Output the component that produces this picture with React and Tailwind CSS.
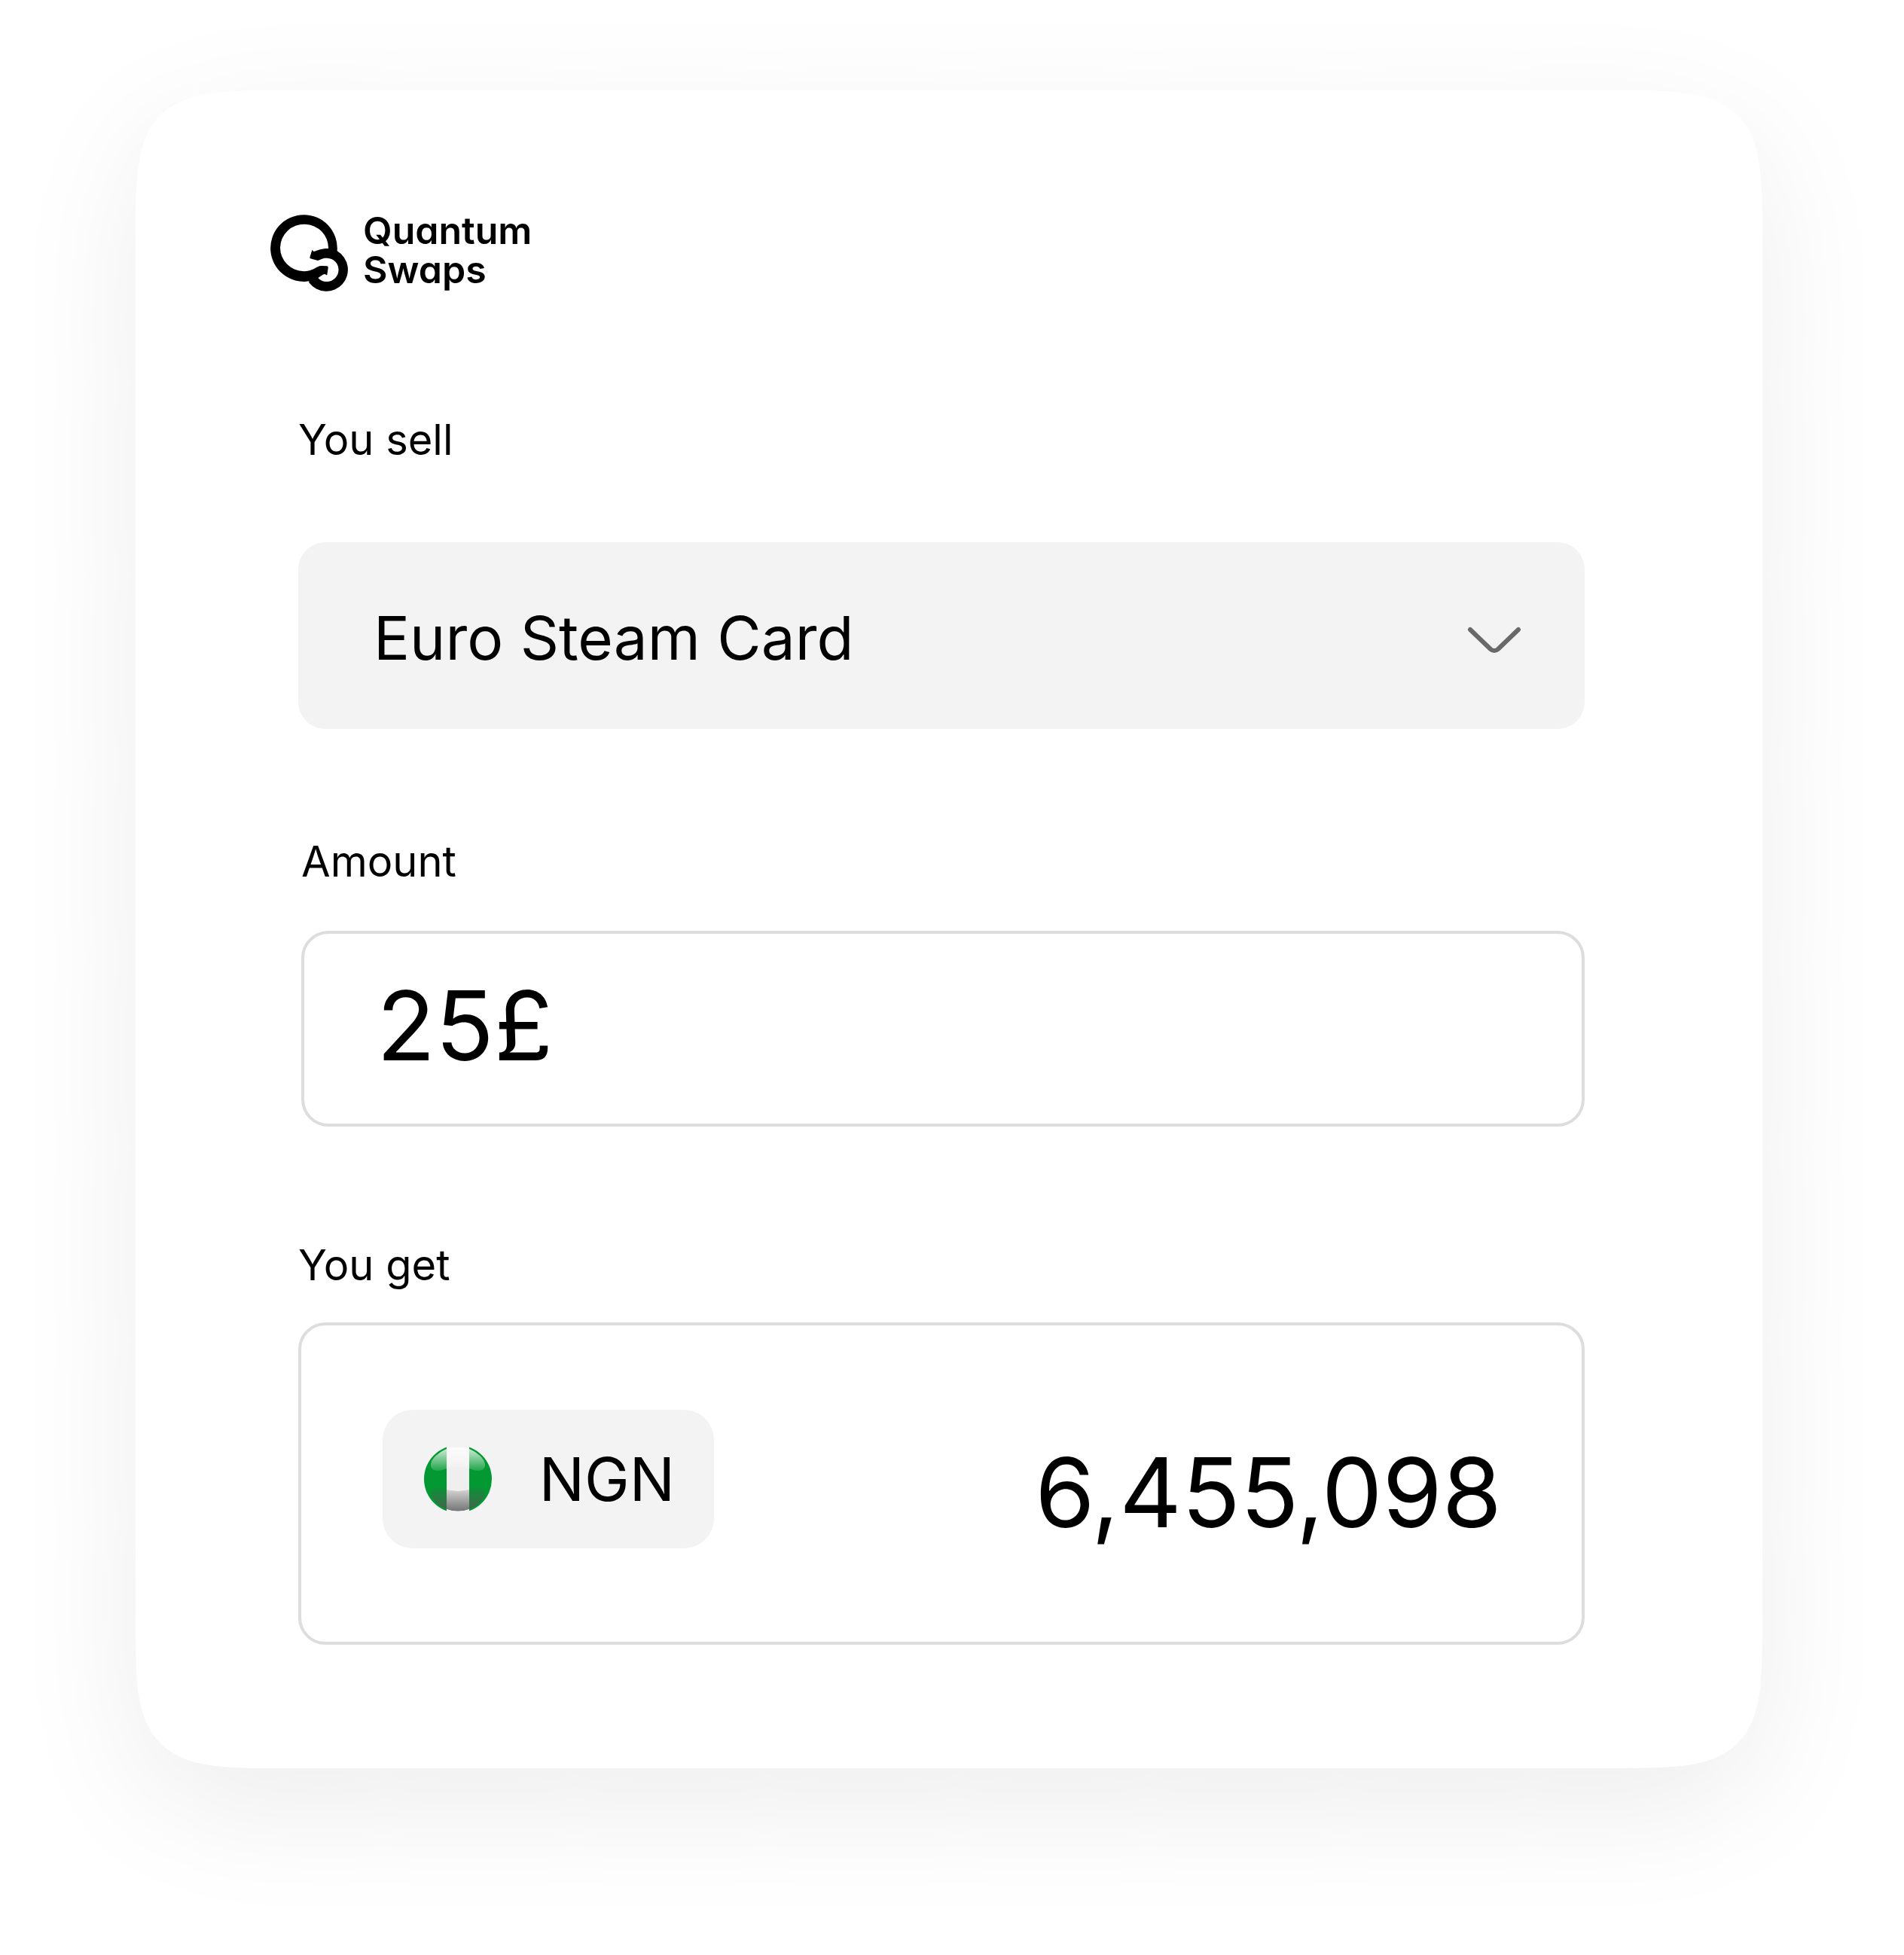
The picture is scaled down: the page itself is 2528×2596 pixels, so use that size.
import React from "react";

function LogoMark() {
  return (
    <svg className="h-[108px] w-[104px] shrink-0" viewBox="54 30 312 324" aria-hidden="true">
      <path
        fill="#000"
        fillRule="evenodd"
        d="M323 188 A133 133 0 1 0 211 310 L211 316 A86 86 0 1 0 323 190 Z
           M288 180 A96 94 0 1 0 191 271 C220 271 232 258 246 253 Q252 249 260 249 L282 250 Q288 251 287 257 L283 285 Q279 287 276 282 Q272 281 266 284 L247 297 Q260 312 280 312 A47 47 0 0 0 283 218 C266 217 258 224 246 228 L216 220 Q213 217 215 212 L223 186 L230 192 C246 188 254 180 288 180 Z"
      />
    </svg>
  );
}

function ChevronDown() {
  return (
    <svg
      className="pointer-events-none col-start-1 row-start-1 mt-3 mr-[84px] h-[36px] w-[72px] self-center justify-self-end"
      viewBox="0 0 72 36"
      fill="none"
      stroke="#696969"
      strokeWidth="6"
      strokeLinecap="round"
      aria-hidden="true"
    >
      <path d="M4 4 L31 30 Q36 34 41 30 L68 4" />
    </svg>
  );
}

function NigeriaFlag() {
  return (
    <svg className="size-24 shrink-0" viewBox="-48 -48 96 96" aria-hidden="true">
      <defs>
        <linearGradient id="gloss" x1="0" y1="0" x2="0" y2="1">
          <stop offset="0" stopColor="#fff" stopOpacity="0.85" />
          <stop offset="1" stopColor="#fff" stopOpacity="0.12" />
        </linearGradient>
        <linearGradient id="shade" x1="0" y1="0" x2="0" y2="1">
          <stop offset="0" stopColor="#555" stopOpacity="0.12" />
          <stop offset="1" stopColor="#555" stopOpacity="0.8" />
        </linearGradient>
        <clipPath id="disc">
          <circle r="45" />
        </clipPath>
        <clipPath id="inner">
          <circle r="42.7" />
        </clipPath>
      </defs>
      <g clipPath="url(#disc)">
        <rect x="-45" y="-45" width="30" height="90" fill="#039932" />
        <rect x="15" y="-45" width="30" height="90" fill="#039932" />
      </g>
      <g clipPath="url(#inner)">
        <rect x="-15" y="-45" width="30" height="90" fill="#efefef" />
        <path
          fill="url(#gloss)"
          d="M-36 -20 C-34 -31 -20 -42.7 0 -42.7 C20 -42.7 34 -31 36 -20 C37 -11 27 -9 18 -13 Q0 -20 -18 -13 C-27 -9 -37 -11 -36 -20 Z"
        />
        <path
          fill="url(#shade)"
          d="M-36 20 C-34 31 -20 42.7 0 42.7 C20 42.7 34 31 36 20 C36 11 27 9 18 13 Q0 19 -18 13 C-27 9 -36 11 -36 20 Z"
        />
      </g>
    </svg>
  );
}

const labelClass = "block self-start text-[56px] leading-[64px]";

export default function App() {
  return (
    <main className="min-h-screen bg-white pt-[120px] pr-[188px] pb-[248px] pl-[180px] font-['Inter',sans-serif] text-black">
      <section className="rounded-[120px] bg-white pt-[160px] pr-[236px] pb-[164px] pl-[178px] shadow-[0_48px_170px_rgba(0,0,0,0.08)] supports-[corner-shape:squircle]:rounded-[208px] supports-[corner-shape:squircle]:[corner-shape:squircle]">
        <header className="flex items-start gap-5">
          <LogoMark />
          <h1 className="text-[50px] leading-[52px] font-semibold [font-feature-settings:'cv11']">
            Quantum
            <br />
            Swaps
          </h1>
        </header>

        <form className="mt-[164px] flex flex-col pl-[38px]">
          <label htmlFor="sell" className={labelClass}>
            You sell
          </label>
          <div className="mt-[104px] grid">
            <select
              id="sell"
              defaultValue="Euro Steam Card"
              className="col-start-1 row-start-1 h-[248px] w-full appearance-none rounded-[36px] bg-[#f3f3f3] pt-[6px] pr-40 pl-[100px] text-[80px] outline-none"
            >
              <option>Euro Steam Card</option>
            </select>
            <ChevronDown />
          </div>

          <div className="mt-36 flex flex-col pl-1">
            <label htmlFor="amount" className={labelClass}>
              Amount
            </label>
            <input
              id="amount"
              type="text"
              defaultValue="25£"
              className="mt-[60px] h-[260px] w-full rounded-[36px] border-4 border-[#ddd] bg-white px-24 pb-[9px] text-[128px] outline-none"
            />
          </div>

          <label htmlFor="receive" className={`${labelClass} mt-[152px]`}>
            You get
          </label>
          <div className="mt-11 flex h-[428px] items-start justify-between rounded-[36px] border-4 border-[#ddd] bg-white pt-28 pr-[106px] pl-[108px]">
            <button
              type="button"
              className="flex h-[184px] w-[440px] items-center justify-between rounded-[40px] bg-[#f3f3f3] px-[52px] text-[80px]"
            >
              <NigeriaFlag />
              NGN
            </button>
            <output id="receive" className="mt-[30px] text-[128px] leading-[160px]">
              6,455,098
            </output>
          </div>
        </form>
      </section>
    </main>
  );
}
